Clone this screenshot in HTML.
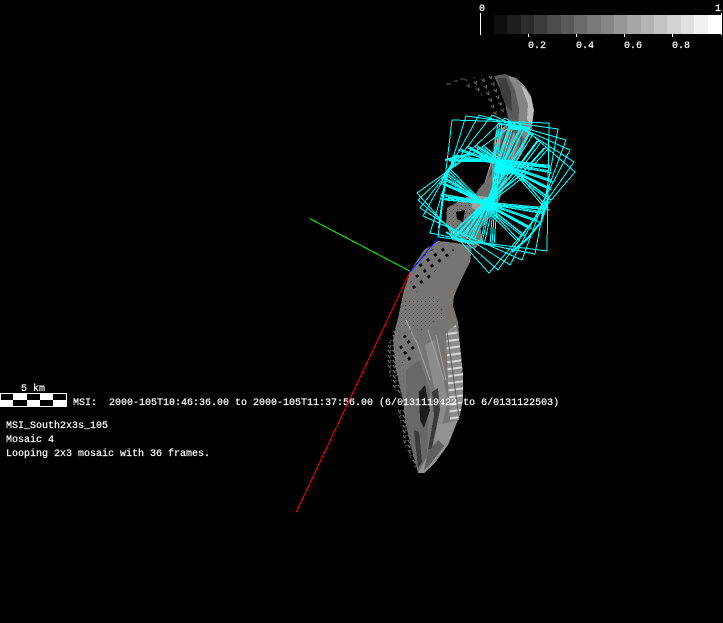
<!DOCTYPE html>
<html>
<head>
<meta charset="utf-8">
<style>
html,body{margin:0;padding:0;background:#000;width:723px;height:623px;overflow:hidden}
svg{display:block}
text{font-family:"Liberation Mono","DejaVu Sans Mono",monospace;font-size:10px;fill:#fff;stroke:#fff;stroke-width:.2;white-space:pre}
</style>
</head>
<body>
<svg width="723" height="623" viewBox="0 0 723 623" xmlns="http://www.w3.org/2000/svg" shape-rendering="crispEdges">
<defs>
<pattern id="holes" width="9" height="7" patternUnits="userSpaceOnUse" patternTransform="rotate(-35)"><rect width="9" height="7" fill="#777573"/><rect x="2" y="2" width="3" height="3" fill="#000"/></pattern>
<pattern id="dots" width="4" height="4" patternUnits="userSpaceOnUse"><rect width="4" height="4" fill="#777573"/><rect x="1" y="1" width="1" height="1" fill="#3a3a3a"/></pattern>
<pattern id="mesh" width="5" height="5" patternUnits="userSpaceOnUse"><path d="M0 0h3M0 0v4M3 0l2 3" fill="none" stroke="#6a6a6a"/></pattern>
<pattern id="ladder" width="13" height="7" patternUnits="userSpaceOnUse" patternTransform="rotate(-8)"><rect width="13" height="7" fill="#8c8c8c"/><rect width="13" height="2" fill="#d8d8d8"/><rect x="6" width="1" height="7" fill="#5a5a5a"/></pattern>
<pattern id="sparse" width="8" height="7" patternUnits="userSpaceOnUse" patternTransform="rotate(-20)"><path d="M1 1l2 3l1-3" fill="none" stroke="#666"/></pattern>
<pattern id="sparse2" width="6" height="5" patternUnits="userSpaceOnUse"><path d="M1 0l1 3h3v-2" fill="none" stroke="#7b7b7b"/></pattern>
<pattern id="streak" width="6" height="6" patternUnits="userSpaceOnUse" patternTransform="rotate(20)"><rect width="6" height="6" fill="#6f6f6f"/><rect width="2" height="6" fill="#9a9a9a"/><rect x="4" width="1" height="6" fill="#3c3c3c"/></pattern>
</defs>
<rect width="723" height="623" fill="#000"/>

<!-- colorbar -->
<g>
<rect x="494" y="15" width="14" height="19" fill="#0f0f0f"/>
<rect x="507" y="15" width="14" height="19" fill="#1e1e1e"/>
<rect x="521" y="15" width="14" height="19" fill="#2d2d2d"/>
<rect x="534" y="15" width="14" height="19" fill="#3c3c3c"/>
<rect x="547" y="15" width="14" height="19" fill="#4b4b4b"/>
<rect x="561" y="15" width="14" height="19" fill="#5a5a5a"/>
<rect x="574" y="15" width="14" height="19" fill="#696969"/>
<rect x="587" y="15" width="14" height="19" fill="#787878"/>
<rect x="601" y="15" width="14" height="19" fill="#878787"/>
<rect x="614" y="15" width="14" height="19" fill="#969696"/>
<rect x="627" y="15" width="14" height="19" fill="#a5a5a5"/>
<rect x="641" y="15" width="14" height="19" fill="#b4b4b4"/>
<rect x="654" y="15" width="14" height="19" fill="#c3c3c3"/>
<rect x="667" y="15" width="14" height="19" fill="#d2d2d2"/>
<rect x="681" y="15" width="14" height="19" fill="#e1e1e1"/>
<rect x="694" y="15" width="14" height="19" fill="#f0f0f0"/>
<rect x="708" y="15" width="14" height="19" fill="#ffffff"/>
<rect x="480" y="13" width="1" height="22" fill="#fff"/>
<rect x="721" y="13" width="1" height="22" fill="#fff"/>
<rect x="528" y="34" width="1" height="3" fill="#fff"/>
<rect x="576" y="34" width="1" height="3" fill="#fff"/>
<rect x="624" y="34" width="1" height="3" fill="#fff"/>
<rect x="672" y="34" width="1" height="3" fill="#fff"/>
<text x="479" y="11">0</text>
<text x="715" y="11">1</text>
<text x="528" y="48">0.2</text>
<text x="576" y="48">0.4</text>
<text x="624" y="48">0.6</text>
<text x="672" y="48">0.8</text>
</g>

<!-- scale bar -->
<rect x="0" y="393" width="67" height="14" fill="#fff"/>
<rect x="1" y="394" width="12" height="6" fill="#000"/>
<rect x="27" y="394" width="13" height="6" fill="#000"/>
<rect x="53" y="394" width="13" height="6" fill="#000"/>
<rect x="13" y="400" width="14" height="6" fill="#000"/>
<rect x="40" y="400" width="13" height="6" fill="#000"/>
<text x="21" y="391">5 km</text>
<text x="6" y="428">MSI_South2x3s_105</text>
<text x="6" y="442">Mosaic 4</text>
<text x="6" y="456">Looping 2x3 mosaic with 36 frames.</text>

<!-- top crescent -->
<path d="M446 84h5M454 81h4M460 79h5" stroke="#5f5f5f" fill="none"/>
<polygon points="464,80 482,75 500,76 500,92 504,112 496,124 490,105 478,92 468,88" fill="url(#sparse)"/>
<polygon points="494,76 505,74 516,78 525,86 531,96 534,110 532,128 525,146 515,160 503,160 508,140 508,118 504,98" fill="#5a5a5a"/>
<polygon points="508,76 516,78 525,86 531,96 534,110 532,128 526,142 518,130 519,108 515,90" fill="#858585"/>
<polygon points="521,85 526,90 531,97 534,110 532,124 527,120 528,104" fill="#bcbcbc"/>
<polygon points="498,78 506,78 511,92 512,112 505,104 500,90" fill="#3f3f3f"/>
<polygon points="496,130 508,125 525,146 512,168 500,182 488,190 482,190 490,165" fill="url(#streak)"/>

<!-- middle piece -->
<polygon points="500,165 508,180 494,212 478,232 466,236 466,212 478,190" fill="#6f6f6f"/>
<polygon points="468,194 488,197 482,212 470,208" fill="#a0a0a0"/>
<polygon points="447,208 468,196 472,205 468,232 466,244 452,240 446,224" fill="url(#dots)"/>
<polygon points="456,212 465,210 463,222 457,219" fill="#000"/>
<polygon points="466,232 480,222 482,240 474,250" fill="#777573"/>

<!-- lower body -->
<polygon points="411,270 424,250 438,241 456,243 472,246 470,262 461,280 454,296 453,306 458,322 460,345 463,375 463,400 458,420 448,445 434,464 424,473 418,473 412,450 406,425 403,400 396,370 393,340 398,318 404,290" fill="#777573"/>
<polygon points="414,272 426,252 446,244 454,250 446,260 436,270 424,286 412,296 408,290" fill="url(#holes)"/>
<polygon points="404,300 436,296 446,316 424,330 398,328" fill="url(#dots)"/>
<polygon points="388,345 398,320 404,340 404,400 392,385 386,358" fill="url(#mesh)"/>
<polygon points="399,340 410,330 418,345 408,365 400,362" fill="url(#holes)"/>
<polygon points="398,410 410,405 416,470 404,445" fill="url(#mesh)"/>

<!-- stripes -->
<polygon points="406,370 420,360 430,390 426,470 418,473 412,450 406,425" fill="#686868"/>
<polygon points="419,392 425,385 430,410 424,428 420,420" fill="#1c1c1c"/>
<polygon points="425,345 434,340 448,400 436,452 430,446 438,405" fill="#8b8b8b"/>
<polygon points="432,392 438,388 440,410 432,448 428,450 434,415" fill="#3a3a3a"/>
<polygon points="414,430 419,432 422,462 418,468" fill="#3a3a3a"/>
<polygon points="446,332 456,325 460,345 463,375 463,400 459,420 450,420 448,380" fill="url(#ladder)"/>
<polygon points="438,425 458,420 448,445 434,464 424,473 418,473 424,462 434,446" fill="#939393"/>
<polygon points="428,452 438,440 444,446 432,462 424,470" fill="#5f5f5f"/>
<path d="M406 320l10 22M416 340l14 40M428 330l16 50M436 335l10 45" stroke="#a0a0a0" fill="none"/>

<text x="73" y="405">MSI:  2000-105T10:46:36.00 to 2000-105T11:37:56.00 (6/0131119422 to 6/0131122503)</text>

<!-- asteroid bits over text -->
<path d="M398 398l6 3M414 398l4 6M431 397l2 8M438 399l3 5M444 397l1 8" stroke="#777" fill="none"/>

<!-- axes -->
<g shape-rendering="crispEdges" fill="none" stroke-width="1">
<line x1="309.500" y1="218.500" x2="410.500" y2="271.500" stroke="#00ff00"/>
<line x1="410" y1="272" x2="296" y2="512.500" stroke="#ff0000"/>
<line x1="410" y1="272" x2="438" y2="238" stroke="#0000ff"/>
</g>

<!-- cyan frames -->
<g fill="none" stroke="#00ffff" stroke-width="1">
<polygon points="452,120 549,123 547,251 438,237"/>
<polygon points="466,116 558,129 535,254 430,233"/>
<polygon points="479,115 566,140 522,260 423,216"/>
<polygon points="492,115 570,150 510,265 420,208"/>
<polygon points="505,118 574,162 498,270 418,200"/>
<polygon points="517,122 575,172 489,273 417,193"/>
<g id="spokes">
<path d="M500 121L495 160L495 203L492 244M447 159L495 160L548 166M443 198L495 203L548 208"/>
<path d="M512 122L499 162L491 203L482 243M454 155L499 162L550 171M442 194L491 203L543 212"/>
<path d="M522 127L503 164L488 203L472 238M460 149L503 164L551 180M442 182L488 203L537 220"/>
<path d="M531 132L509 168L486 203L465 236M468 146L509 168L550 188M444 177L486 203L530 227"/>
<path d="M539 140L515 172L485 204L458 235M476 145L515 172L549 198M447 173L485 204L523 234"/>
<path d="M546 147L520 176L484 204L453 233M484 146L520 176L546 206M450 169L484 204L518 239"/>
</g>
<use href="#spokes" transform="translate(2 2)"/>
<use href="#spokes" transform="translate(-2 1)"/>
<g stroke-width="2">
<path d="M439 228L443 196L447 172L456 158"/>
<path d="M446 232L458 240L474 244"/>
<path d="M549 196L541 222L528 238L512 252"/>
<path d="M500 124L530 128M445 160L470 154M500 160L550 166M448 197L470 200"/>
</g>
</g>
<g fill="#00ffff">
<ellipse cx="504" cy="170" rx="10" ry="5"/>
<ellipse cx="488" cy="204" rx="6" ry="7"/>
<ellipse cx="516" cy="128" rx="7" ry="2"/>
</g>
</svg>
</body>
</html>
